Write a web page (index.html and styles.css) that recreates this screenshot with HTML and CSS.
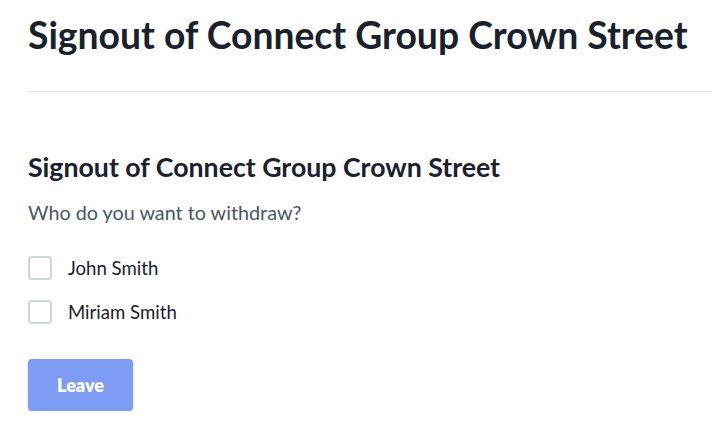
FILE: index.html
```html
<!DOCTYPE html>
<html lang="en">

<head>
    <meta charset="UTF-8">
    <meta name="viewport" content="width=device-width, initial-scale=1.0">
    <title>Signout</title>
    <link rel="stylesheet" href="styles.css">
</head>

<body>
    <div class="page">
        <!-- page header -->
        <div class="page-header">
            <h1>Signout of Connect Group Crown Street</h1>
        </div>

        <!-- withdraw form -->
        <form action="#" method="post" class="signout-form">
            <h2>Signout of Connect Group Crown Street</h2>
            <p class="hint">Who do you want to withdraw?</p>

            <label class="person">
                <input type="checkbox" name="person" value="1">
                <span>John Smith</span>
            </label>
            <label class="person">
                <input type="checkbox" name="person" value="2">
                <span>Miriam Smith</span>
            </label>

            <button type="submit" class="leave" disabled>Leave</button>
        </form>
    </div>
</body>

</html>
```

FILE: styles.css
```css
body {
    margin: 0;
    font-family: Lato, "Noto Sans", sans-serif;
    color: #1a202c;
    background-color: #fff;
}

.page {
    padding-left: 28px;
}

/* header */
.page-header {
    padding: 12px 0 34px;
    border-bottom: 1px solid #e2e8f0;
}

.page-header h1 {
    margin: 0;
    font-size: 37.3px;
    font-weight: 700;
    line-height: 45px;
}

/* form */
.signout-form {
    display: flex;
    flex-direction: column;
    align-items: flex-start;
    padding-top: 59px;
}

.signout-form h2 {
    margin: 0;
    font-size: 26.7px;
    font-weight: 700;
    line-height: 32px;
}

.hint {
    margin: 15px 0 30px;
    font-size: 19.8px;
    line-height: 28px;
    color: #4a5568;
}

.person {
    display: flex;
    align-items: center;
    gap: 16px;
    margin-bottom: 20px;
    font-size: 18.6px;
    line-height: 24px;
}

.person input {
    appearance: none;
    margin: 0;
    width: 24px;
    height: 24px;
    border: 2px solid #cbd5e0;
    border-radius: 4px;
    background-color: #fff;
}

.leave {
    margin-top: 15px;
    width: 105px;
    height: 52px;
    border: none;
    border-radius: 4px;
    background-color: #7f9cf5;
    color: #fff;
    font-family: inherit;
    font-size: 18px;
    font-weight: 800;
    box-shadow: 0 1px 3px rgba(0, 0, 0, 0.15);
}
```
